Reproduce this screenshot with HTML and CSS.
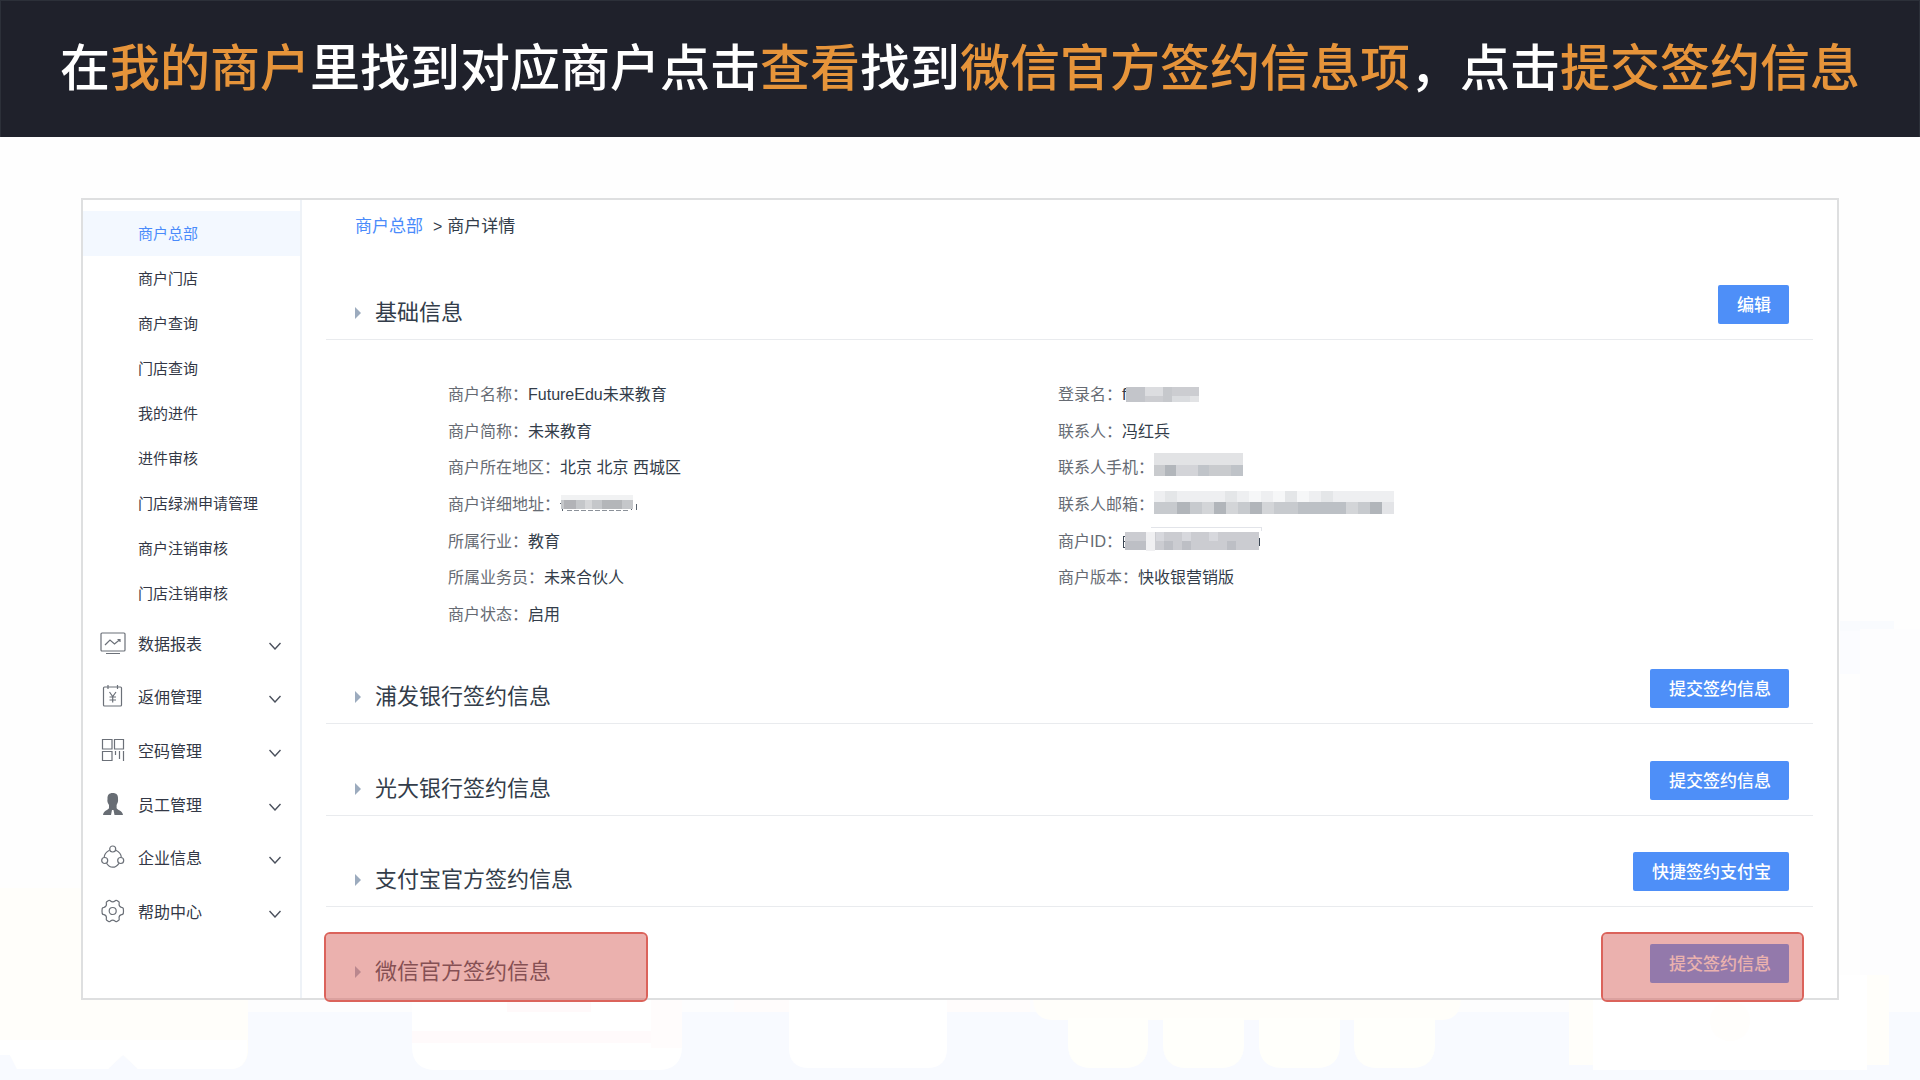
FILE: index.html
```html
<!DOCTYPE html>
<html lang="zh-CN">
<head>
<meta charset="utf-8">
<meta name="viewport" content="width=device-width, initial-scale=1">
<title>商户详情</title>
<link rel="stylesheet" href="styles.css">
</head>
<body>
<div class="page">
  <svg class="scenery" viewBox="0 0 1920 480" aria-hidden="true">
    <rect x="1840" y="21" width="54" height="10" fill="#f9fbfe"/>
    <rect x="1840" y="31" width="20" height="43" fill="#fbfcff"/>
    <rect x="1860" y="29" width="60" height="385" fill="#fdfdfe"/>
    <rect y="398" width="1920" height="14" fill="#fdfdfe"/>
    <rect y="412" width="1920" height="68" fill="#f8faff"/>
    <path d="M0 288H248V452Q246 469 230 469H138L123 455L108 469H17L10 455H0Z" fill="#fffefa"/>
    <path d="M0 440H247V452Q246 469 230 469H138L123 455L108 469H17L10 455H0Z" fill="#fff"/>
    <path d="M412 398H682V446Q682 470 658 470H436Q412 470 412 446Z" fill="#fff"/>
    <rect x="412" y="431" width="270" height="12" fill="#fffafb"/>
    <rect x="507" y="400" width="84" height="12" fill="#fff9fa"/>
    <rect x="651" y="398" width="31" height="50" fill="#fffcfc"/>
    <rect x="734" y="398" width="296" height="14" fill="#fffcfc"/>
    <path d="M789 398H947V448Q947 468 927 468H809Q789 468 789 448Z" fill="#fff"/>
    <path d="M1033 398H1461Q1461 420 1441 420H1053Q1033 420 1033 398Z" fill="#fffefa"/>
    <g fill="#fffffb">
      <path d="M1068 418H1148V444Q1148 468 1124 468H1092Q1068 468 1068 444Z"/>
      <path d="M1163 418H1244V444Q1244 468 1220 468H1187Q1163 468 1163 444Z"/>
      <path d="M1259 418H1340V444Q1340 468 1316 468H1283Q1259 468 1259 444Z"/>
      <path d="M1354 418H1435V444Q1435 468 1411 468H1378Q1354 468 1354 444Z"/>
    </g>
    <rect x="1569" y="375" width="320" height="90" fill="#fffefa"/>
    <rect x="1593" y="375" width="274" height="95" fill="#fff"/>
    <circle cx="1730" cy="421" r="20" fill="#fffefc"/>
  </svg>

  <header class="banner">
    <h1 class="banner-title">在<em>我的商户</em>里找到对应商户点击<em>查看</em>找到<em>微信官方签约信息项</em>，点击<em>提交签约信息</em></h1>
  </header>

  <div class="stage">
    <div class="panel">
      <nav class="sidebar" aria-label="主菜单">
        <ul class="submenu">
          <li><a class="sub-link is-active" href="#" aria-current="page">商户总部</a></li>
          <li><a class="sub-link" href="#">商户门店</a></li>
          <li><a class="sub-link" href="#">商户查询</a></li>
          <li><a class="sub-link" href="#">门店查询</a></li>
          <li><a class="sub-link" href="#">我的进件</a></li>
          <li><a class="sub-link" href="#">进件审核</a></li>
          <li><a class="sub-link" href="#">门店绿洲申请管理</a></li>
          <li><a class="sub-link" href="#">商户注销审核</a></li>
          <li><a class="sub-link" href="#">门店注销审核</a></li>
        </ul>
        <ul class="menu">
          <li><button class="menu-button" type="button">
            <svg class="menu-icon" viewBox="0 0 26 26" aria-hidden="true"><rect x="1" y="3" width="24" height="18" rx="1"/><path d="M5 15L10 10L14.500 14L20 9.500M17.500 9.500H20V12M6 23.500H20"/></svg>
            <span class="menu-label">数据报表</span>
            <svg class="chevron" viewBox="0 0 12 8" aria-hidden="true"><path d="M0.500 1L6 7L11.500 1"/></svg>
          </button></li>
          <li><button class="menu-button" type="button">
            <svg class="menu-icon" viewBox="0 0 26 26" aria-hidden="true"><rect x="3.500" y="4" width="18" height="19" rx="1"/><path d="M8 2V6M17.500 2V6M9.500 9L12.700 13.500L16 9M9.500 14H16M9.500 17H16M12.700 13.500V19.500"/></svg>
            <span class="menu-label">返佣管理</span>
            <svg class="chevron" viewBox="0 0 12 8" aria-hidden="true"><path d="M0.500 1L6 7L11.500 1"/></svg>
          </button></li>
          <li><button class="menu-button" type="button">
            <svg class="menu-icon" viewBox="0 0 26 26" aria-hidden="true"><path d="M2.500 2.500H12V12H2.500ZM14.500 2.500H23.500V12H14.500ZM2.500 14.500H12V23.500H2.500ZM15.500 14V18M19.500 14V22M23.500 14V24"/></svg>
            <span class="menu-label">空码管理</span>
            <svg class="chevron" viewBox="0 0 12 8" aria-hidden="true"><path d="M0.500 1L6 7L11.500 1"/></svg>
          </button></li>
          <li><button class="menu-button" type="button">
            <svg class="menu-icon is-solid" viewBox="0 0 26 26" aria-hidden="true"><path d="M12.700 2C16.500 2 18.300 4 18 8C18.400 10.500 17.600 12 16.600 14V17C17 19 22.500 19.500 23 24H14.500L13.500 19H12L11 24H3C3.500 19.500 8.500 19 9 17V14C7.800 12 7 10.500 7.500 8C7.200 4 9 2 12.700 2Z"/></svg>
            <span class="menu-label">员工管理</span>
            <svg class="chevron" viewBox="0 0 12 8" aria-hidden="true"><path d="M0.500 1L6 7L11.500 1"/></svg>
          </button></li>
          <li><button class="menu-button" type="button">
            <svg class="menu-icon" viewBox="0 0 26 26" aria-hidden="true"><circle cx="12.700" cy="5" r="3"/><circle cx="4.700" cy="16.500" r="3"/><circle cx="20.700" cy="16.500" r="3"/><path d="M9.500 6.200Q4.500 8.500 4.200 13.300M15.900 6.200Q21 8.500 21.300 13.300M6.500 19.300Q9 23.200 12.700 23.200T19 19.300"/></svg>
            <span class="menu-label">企业信息</span>
            <svg class="chevron" viewBox="0 0 12 8" aria-hidden="true"><path d="M0.500 1L6 7L11.500 1"/></svg>
          </button></li>
          <li><button class="menu-button" type="button">
            <svg class="menu-icon" viewBox="0 0 26 26" aria-hidden="true"><circle cx="12.700" cy="13" r="3.500"/><path d="M8.500 2.500Q10 2 10.500 3Q12.700 4.800 15 3Q15.500 2 17 2.500L19 4Q19.600 5 19 6Q19 8.800 21.500 9.300Q23 9.300 23.300 10.500L23.500 13L23.300 15.500Q23 16.700 21.500 16.700Q19 17.200 19 20Q19.600 21 19 22L17 23.500Q15.500 24 15 23Q12.700 21.200 10.500 23Q10 24 8.500 23.500L6.500 22Q5.900 21 6.500 20Q6.500 17.200 4 16.700Q2.500 16.700 2.200 15.500L2 13L2.200 10.500Q2.500 9.300 4 9.300Q6.500 8.800 6.500 6Q5.900 5 6.500 4Z"/></svg>
            <span class="menu-label">帮助中心</span>
            <svg class="chevron" viewBox="0 0 12 8" aria-hidden="true"><path d="M0.500 1L6 7L11.500 1"/></svg>
          </button></li>
        </ul>
      </nav>

      <main class="content">
        <nav class="breadcrumb" aria-label="面包屑">
          <a href="#">商户总部</a>
          <span class="crumb-sep">&gt;</span>
          <span>商户详情</span>
        </nav>

        <section>
          <div class="section-head">
            <h2 class="section-title">基础信息</h2>
            <button class="action" type="button">编辑</button>
          </div>
          <div class="details">
            <dl class="detail-list">
              <div class="detail"><dt>商户名称：</dt><dd>FutureEdu未来教育</dd></div>
              <div class="detail"><dt>商户简称：</dt><dd>未来教育</dd></div>
              <div class="detail"><dt>商户所在地区：</dt><dd>北京 北京 西城区</dd></div>
              <div class="detail"><dt>商户详细地址：</dt><dd>
                <svg class="mosaic" width="78" height="30" viewBox="1 0 78 30" role="img" aria-label="已隐藏">
                  <path d="M3 9V21M1 13H5M72 20V17M77 20V14" fill="none" stroke="#58616c"/>
                  <path d="M8 20H70" fill="none" stroke="#8b9199" stroke-dasharray="5 2"/>
                  <rect x="2" y="5" width="72" height="5" fill="#f1f2f3"/>
                  <rect x="2" y="10" width="72" height="9" fill="#c5c7ca"/>
                  <rect x="5" y="10" width="12" height="9" fill="#b2b3b7"/><rect x="26" y="10" width="7" height="9" fill="#d6d7d9"/><rect x="43" y="10" width="20" height="9" fill="#b4b6b9"/>
                </svg></dd></div>
              <div class="detail"><dt>所属行业：</dt><dd>教育</dd></div>
              <div class="detail"><dt>所属业务员：</dt><dd>未来合伙人</dd></div>
              <div class="detail"><dt>商户状态：</dt><dd>启用</dd></div>
            </dl>
            <dl class="detail-list">
              <div class="detail"><dt>登录名：</dt><dd>f<svg class="mosaic" width="73" height="30" viewBox="0 0 73 30" role="img" aria-label="已隐藏">
                  <rect y="7" width="73" height="15" fill="#cccdd1"/>
                  <rect y="7" width="19" height="15" fill="#c3c5ca"/><rect x="19" y="7" width="18" height="9" fill="#dcdde0"/><rect x="37" y="7" width="9" height="15" fill="#c6c8cc"/><rect x="46" y="16" width="18" height="6" fill="#dadcdf"/><rect x="64" y="16" width="9" height="6" fill="#e2e3e5"/>
                </svg></dd></div>
              <div class="detail"><dt>联系人：</dt><dd>冯红兵</dd></div>
              <div class="detail"><dt>联系人手机：</dt><dd>
                <svg class="mosaic" width="90" height="30" viewBox="15 0 90 30" role="img" aria-label="已隐藏">
                  <rect x="15" width="89" height="13" fill="#e2e3e5"/>
                  <rect x="15" y="12" width="89" height="11" fill="#c9cbce"/>
                  <rect x="26" y="12" width="11" height="11" fill="#b2b6bb"/><rect x="37" y="12" width="22" height="11" fill="#d3d4d8"/><rect x="59" y="12" width="11" height="11" fill="#c0c4c9"/><rect x="92" y="12" width="12" height="11" fill="#bfc3c8"/>
                </svg></dd></div>
              <div class="detail"><dt>联系人邮箱：</dt><dd>
                <svg class="mosaic" width="241" height="30" viewBox="15 0 241 30" role="img" aria-label="已隐藏">
                  <rect x="14" y="1" width="241" height="11" fill="#eeeff1"/>
                  <path d="M26 1H38V12H26ZM86 1H98V12H86ZM146 1H158V12H146ZM182 1H194V12H182Z" fill="#e4e6e8"/>
                  <path d="M110 1H122V12H110ZM134 1H146V12H134ZM158 1H170V12H158Z" fill="#f6f7f8"/>
                  <rect x="14" y="12" width="229" height="12" fill="#c7cace"/>
                  <path d="M38 12H51V24H38ZM75 12H87V24H75ZM111 12H123V24H111ZM231 12H243V24H231Z" fill="#b1b5ba"/>
                  <path d="M63 12H75V24H63ZM87 12H99V24H87ZM123 12H135V24H123ZM207 12H219V24H207Z" fill="#d3d5d8"/>
                  <rect x="159" y="12" width="48" height="12" fill="#bcc0c5"/><rect x="243" y="12" width="12" height="12" fill="#e3e4e7"/>
                </svg></dd></div>
              <div class="detail"><dt>商户ID：</dt><dd>
                <svg class="mosaic" width="142" height="30" viewBox="1 0 142 30" role="img" aria-label="已隐藏">
                  <path d="M6 9H2V20H6M2 14H6" fill="none" stroke="#3c4754"/>
                  <path d="M138 11Q139 15 138 19" fill="none" stroke="#3c4754"/>
                  <path d="M30 0.500H140V4" fill="none" stroke="#e2e4e9"/>
                  <rect x="4" y="5" width="134" height="18" fill="#cbccd1"/>
                  <path d="M4 14H25V23H4ZM43 14H52V23H43ZM61 14H70V23H61ZM106 14H115V23H106Z" fill="#bdbfc5"/>
                  <path d="M35 5H43V14H35ZM88 5H97V14H88ZM61 5H70V14H61Z" fill="#d7d8dd"/>
                  <rect x="25" y="5" width="9" height="19" fill="#f0f0f2"/>
                </svg></dd></div>
              <div class="detail"><dt>商户版本：</dt><dd>快收银营销版</dd></div>
            </dl>
          </div>
        </section>

        <div class="contracts">
          <section class="section-head">
            <h2 class="section-title">浦发银行签约信息</h2>
            <button class="action" type="button">提交签约信息</button>
          </section>
          <section class="section-head">
            <h2 class="section-title">光大银行签约信息</h2>
            <button class="action" type="button">提交签约信息</button>
          </section>
          <section class="section-head">
            <h2 class="section-title">支付宝官方签约信息</h2>
            <button class="action" type="button">快捷签约支付宝</button>
          </section>
          <section class="section-head is-last">
            <h2 class="section-title">微信官方签约信息</h2>
            <button class="action" type="button">提交签约信息</button>
            <span class="marker marker-title"></span>
            <span class="marker marker-action"></span>
          </section>
        </div>
      </main>
    </div>
  </div>
</div>
</body>
</html>
```
FILE: styles.css
```css
* {
  box-sizing: border-box;
}

body,
h1,
h2,
ul,
dl,
dd {
  margin: 0;
  padding: 0;
}

ul {
  list-style: none;
}

a {
  text-decoration: none;
}

button {
  border: 0;
  background: none;
  color: inherit;
  font-family: inherit;
  cursor: pointer;
}

body {
  background: #fefefe;
  color: #333d4a;
  font-family: "Liberation Sans", "Noto Sans CJK SC", sans-serif;
  font-size: 16px;
  line-height: 24px;
}

.page {
  position: relative;
  min-height: 100vh;
}

/* Pale shop-front illustration along the bottom of the page */
.scenery {
  position: absolute;
  bottom: 0;
  left: 0;
  width: 100%;
}

/* Banner */
.banner {
  display: flex;
  align-items: center;
  justify-content: center;
  min-height: 137px;
  border: 1px solid #2c3039;
  border-bottom: 0;
  background: #1f212b;
}

.banner-title {
  color: #fff;
  font-size: 50px;
  font-weight: 500;
  line-height: 72px;
  text-align: center;
}

.banner-title em {
  color: #e6943a;
  font-style: normal;
}

/* Panel */
.stage {
  position: relative;
  padding: 61px 81px 79px;
}

.panel {
  display: flex;
  border: 2px solid #dedfe0;
  background: #fff;
}

/* Sidebar */
.sidebar {
  flex: 0 0 219px;
  padding-top: 11px;
  border-right: 2px solid #eef2f7;
}

.sub-link {
  display: block;
  padding-left: 55px;
  color: #333846;
  font-size: 15px;
  line-height: 45px;
}

.sub-link.is-active {
  background: #f3f8ff;
  color: #4a8bfb;
}

.menu {
  display: grid;
  grid-auto-rows: 1fr;
  min-height: 322px;
}

.menu-button {
  display: flex;
  align-items: center;
  width: 100%;
  height: 100%;
  padding: 0 19px 0 17px;
  color: #333846;
  font-size: 16px;
  text-align: left;
}

.menu-icon {
  width: 26px;
  height: 26px;
  margin-right: 12px;
  fill: none;
  stroke: #6b7078;
  stroke-width: 1.2;
}

.menu-icon.is-solid {
  fill: #686d74;
  stroke: none;
}

.menu-label {
  flex: 1;
}

.chevron {
  width: 12px;
  height: 8px;
  margin-top: 6px;
  fill: none;
  stroke: #4a505c;
  stroke-width: 1.4;
}

/* Content */
.content {
  flex: 1;
  padding: 15px 24px 0;
}

.breadcrumb {
  display: flex;
  margin-bottom: 46px;
  padding-left: 29px;
  font-size: 17px;
}

.breadcrumb a {
  color: #4a8bfb;
}

.crumb-sep {
  margin: 0 5px 0 10px;
  font-size: 16px;
}

.section-head {
  position: relative;
  display: flex;
  align-items: flex-end;
  justify-content: space-between;
  padding: 0 24px 15px 29px;
  border-bottom: 1px solid #e9ebee;
}

.section-head.is-last {
  border-bottom: 0;
}

.section-title {
  display: flex;
  align-items: center;
  gap: 14px;
  font-size: 22px;
  font-weight: 400;
  line-height: 22px;
}

.section-title::before {
  content: "";
  border: solid transparent;
  border-width: 6px 0 6px 6px;
  border-left-color: #9cabbe;
}

.action {
  height: 39px;
  padding: 0 18px 2px 19px;
  border-radius: 2px;
  background: #4e8ff8;
  color: #fff;
  font-size: 17px;
  font-weight: 500;
}

.details {
  display: grid;
  grid-template-columns: 1fr 1fr;
  min-height: 256px;
  margin: 37px 0 36px;
  padding: 0 145px 0 122px;
}

.detail-list {
  display: grid;
  grid-template-rows: repeat(7, 1fr);
}

.detail {
  display: flex;
  align-items: center;
}

.detail dt {
  color: #666b73;
}

.detail dd {
  display: flex;
  align-items: center;
}

.mosaic {
  display: block;
  shape-rendering: crispEdges;
}

.contracts {
  display: flex;
  flex-direction: column;
  justify-content: space-between;
  min-height: 329px;
}

/* Red call-out boxes over the last row */
.marker {
  position: absolute;
  top: -12px;
  bottom: -4px;
  border: 2px solid #db635b;
  border-radius: 6px;
  background: rgba(215, 99, 93, 0.5);
  background-clip: padding-box;
  pointer-events: none;
}

.marker-title {
  left: -2px;
  width: 324px;
}

.marker-action {
  right: 9px;
  width: 203px;
}
```
